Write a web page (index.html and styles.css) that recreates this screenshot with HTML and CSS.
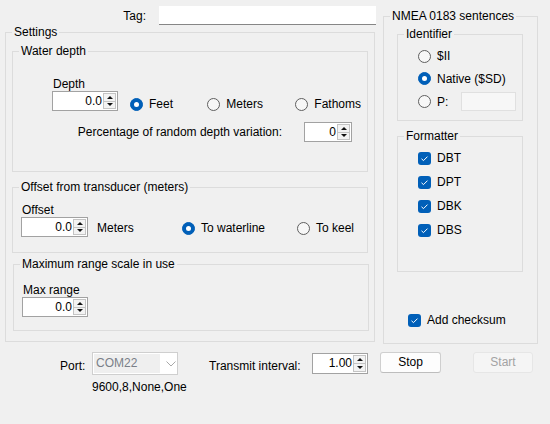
FILE: index.html
```html
<!DOCTYPE html>
<html>
<head>
<meta charset="utf-8">
<link rel="stylesheet" href="styles.css">
</head>
<body>
<div class="window">
  <div class="main">
    <div class="left">
      <div class="tag-row">
        <span class="lbl">Tag:</span>
        <div class="tag-input"></div>
      </div>
      <fieldset class="group settings">
        <legend>Settings</legend>
        <fieldset class="group inner water">
          <legend>Water depth</legend>
          <div class="depth-row">
            <div class="field-col depth-col">
              <span class="field-lbl">Depth</span>
              <div class="spin w66"><span class="val">0.0</span><span class="btns"><span class="up"></span><span class="dn"></span></span></div>
            </div>
            <div class="opt first w78"><span class="radio on"></span><span>Feet</span></div>
            <div class="opt w89"><span class="radio"></span><span>Meters</span></div>
            <div class="opt"><span class="radio"></span><span>Fathoms</span></div>
          </div>
          <div class="pct-row">
            <span>Percentage of random depth variation:</span>
            <div class="spin w48"><span class="val">0</span><span class="btns"><span class="up"></span><span class="dn"></span></span></div>
          </div>
        </fieldset>
        <fieldset class="group inner offset">
          <legend>Offset from transducer (meters)</legend>
          <div class="offset-row">
            <div class="field-col offset-col">
              <span class="field-lbl">Offset</span>
              <div class="spin w67"><span class="val">0.0</span><span class="btns"><span class="up"></span><span class="dn"></span></span></div>
            </div>
            <div class="opt unit w85"><span>Meters</span></div>
            <div class="opt w115"><span class="radio on"></span><span>To waterline</span></div>
            <div class="opt"><span class="radio"></span><span>To keel</span></div>
          </div>
        </fieldset>
        <fieldset class="group inner maxrange">
          <legend>Maximum range scale in use</legend>
          <div class="field-col max-col">
            <span class="field-lbl">Max range</span>
            <div class="spin w66"><span class="val">0.0</span><span class="btns"><span class="up"></span><span class="dn"></span></span></div>
          </div>
        </fieldset>
      </fieldset>
    </div>
    <div class="right">
      <fieldset class="group nmea">
        <legend>NMEA 0183 sentences</legend>
        <fieldset class="group sub identifier">
          <legend>Identifier</legend>
          <div class="list-row h22"><span class="radio"></span><span>$II</span></div>
          <div class="list-row h23"><span class="radio on"></span><span>Native ($SD)</span></div>
          <div class="list-row h23"><span class="radio"></span><span class="p-lbl">P:</span><div class="p-input"></div></div>
        </fieldset>
        <fieldset class="group sub formatter">
          <legend>Formatter</legend>
          <div class="list-row h24"><span class="check"><svg width="13" height="13" viewBox="0 0 13 13"><polyline points="3.5,6.8 5.5,8.6 9.5,4.6" fill="none" stroke="#fff" stroke-width="1"/></svg></span><span>DBT</span></div>
          <div class="list-row h24"><span class="check"><svg width="13" height="13" viewBox="0 0 13 13"><polyline points="3.5,6.8 5.5,8.6 9.5,4.6" fill="none" stroke="#fff" stroke-width="1"/></svg></span><span>DPT</span></div>
          <div class="list-row h24"><span class="check"><svg width="13" height="13" viewBox="0 0 13 13"><polyline points="3.5,6.8 5.5,8.6 9.5,4.6" fill="none" stroke="#fff" stroke-width="1"/></svg></span><span>DBK</span></div>
          <div class="list-row h24"><span class="check"><svg width="13" height="13" viewBox="0 0 13 13"><polyline points="3.5,6.8 5.5,8.6 9.5,4.6" fill="none" stroke="#fff" stroke-width="1"/></svg></span><span>DBS</span></div>
        </fieldset>
        <div class="checksum-row"><span class="check"><svg width="13" height="13" viewBox="0 0 13 13"><polyline points="3.5,6.8 5.5,8.6 9.5,4.6" fill="none" stroke="#fff" stroke-width="1"/></svg></span><span>Add checksum</span></div>
      </fieldset>
    </div>
  </div>
  <div class="bottom">
    <span class="port-lbl">Port:</span>
    <div class="port-col">
      <div class="combo"><span class="combo-sel">COM22</span><svg class="chev" width="10" height="6" viewBox="0 0 10 6"><polyline points="0.5,0.5 5,5 9.5,0.5" fill="none" stroke="#a8a8a8" stroke-width="1"/></svg></div>
      <span class="baud">9600,8,None,One</span>
    </div>
    <span class="ti-lbl">Transmit interval:</span>
    <div class="spin w56 tall"><span class="val">1.00</span><span class="btns"><span class="up"></span><span class="dn"></span></span></div>
    <div class="btn stop">Stop</div>
    <div class="btn start">Start</div>
  </div>
</div>
</body>
</html>
```
FILE: styles.css
```css
html, body {
  margin: 0;
  padding: 0;
  background: #f0f0f0;
}
body {
  width: 550px;
  height: 424px;
  overflow: hidden;
  font-family: "Liberation Sans", Arial, sans-serif;
  font-size: 12px;
  line-height: 14px;
  color: #000;
}
.window {
  padding-left: 5px;
}
.main {
  display: flex;
  align-items: flex-start;
}
.left {
  width: 371px;
}
.tag-row {
  display: flex;
  justify-content: flex-end;
  align-items: center;
  gap: 13px;
  padding-top: 6px;
  height: 19px;
}
.tag-row .lbl {
  padding-top: 1px;
}
.tag-input {
  width: 217px;
  height: 19px;
  box-sizing: border-box;
  background: #fff;
  border-bottom: 1px solid #868686;
}

/* group boxes */
fieldset.group {
  margin: 0;
  border: 1px solid #dcdcdc;
  padding: 0 6px;
  min-width: 0;
  box-sizing: border-box;
}
fieldset.group > legend {
  padding: 0 2px;
  line-height: 14px;
  height: 14px;
}
.settings {
  width: 370px;
  padding-top: 5px !important;
  padding-bottom: 10px !important;
}
.inner {
  width: 356px;
}
.water {
  padding-top: 19px !important;
  padding-bottom: 29px !important;
}
.offset {
  margin-top: 8px !important;
  padding-top: 9px !important;
  padding-bottom: 15px !important;
}
.maxrange {
  margin-top: 4px !important;
  margin-left: 1px !important;
  padding-top: 12px !important;
  padding-bottom: 13px !important;
}

.field-col {
  display: flex;
  flex-direction: column;
}
.field-lbl {
  padding-left: 1px;
  height: 14px;
}
.depth-col { margin-left: 33px; }
.offset-col { margin-left: 2px; }
.max-col { margin-left: 2px; }

.depth-row, .offset-row {
  display: flex;
  align-items: flex-end;
}
.opt {
  display: flex;
  align-items: center;
  gap: 6px;
  height: 20px;
  margin-bottom: -3px;
  white-space: nowrap;
}
.opt.first { margin-left: 12px; }
.opt.unit { margin-left: 9px; margin-bottom: -1px; }
.offset-row .opt { margin-bottom: -1px; }
.w78 { width: 78px; }
.w89 { width: 89px; }
.w85 { width: 85px; }
.w115 { width: 115px; }

.pct-row {
  display: flex;
  justify-content: flex-end;
  align-items: center;
  gap: 22px;
  margin-top: 11px;
  padding-right: 9px;
}

/* spinner */
.spin {
  display: flex;
  height: 20px;
  box-sizing: border-box;
  border: 1px solid #a2a2a2;
  background: #fff;
  padding: 1px 1px 1px 1px;
}
.spin.tall { height: 21px; }
.w66 { width: 66px; }
.w67 { width: 67px; }
.w48 { width: 48px; }
.w56 { width: 56px; }
.spin .val {
  flex: 1;
  text-align: right;
  line-height: 16px;
  padding-right: 1px;
}
.spin.tall .val { line-height: 17px; }
.btns {
  width: 13px;
  box-sizing: border-box;
  display: flex;
  flex-direction: column;
  border: 1px solid #c4c4c4;
  background: #f3f3f3;
}
.btns .up, .btns .dn {
  flex: 1;
  display: flex;
  align-items: center;
  justify-content: center;
}
.btns .up {
  border-bottom: 1px solid #c4c4c4;
}
.btns .up::after {
  content: "";
  border-left: 3px solid transparent;
  border-right: 3px solid transparent;
  border-bottom: 3px solid #111;
}
.btns .dn::after {
  content: "";
  border-left: 3px solid transparent;
  border-right: 3px solid transparent;
  border-top: 3px solid #111;
}

/* radio & checkbox */
.radio {
  flex: none;
  width: 13px;
  height: 13px;
  box-sizing: border-box;
  border-radius: 50%;
  border: 1px solid #5f5f5f;
  background: #f7f7f7;
  display: flex;
  align-items: center;
  justify-content: center;
}
.radio.on {
  background: #005fb8;
  border-color: #005fb8;
}
.radio.on::after {
  content: "";
  width: 5px;
  height: 5px;
  border-radius: 50%;
  background: #fff;
}
.check {
  flex: none;
  width: 13px;
  height: 13px;
  border-radius: 3px;
  background: #005fb8;
  display: flex;
}

/* right column */
.right {
  margin-left: 7px;
  padding-top: 9px;
}
.nmea {
  width: 155px;
  padding-top: 4px !important;
  padding-bottom: 13px !important;
}
.sub {
  width: 126px;
  margin-left: 7px !important;
}
.identifier {
  padding-top: 4px !important;
  padding-bottom: 7px !important;
}
.formatter {
  margin-top: 8px !important;
  padding-top: 3px !important;
  padding-bottom: 29px !important;
}
.list-row {
  display: flex;
  align-items: center;
  gap: 6px;
  margin-left: 14px;
}
.h22 { height: 22px; }
.h23 { height: 23px; }
.h24 { height: 24px; }
.p-lbl { width: 18px; }
.p-input {
  width: 56px;
  height: 19px;
  box-sizing: border-box;
  border: 1px solid #e0e0e0;
  background: #f7f7f7;
}
.checksum-row {
  display: flex;
  align-items: center;
  gap: 6px;
  height: 20px;
  margin-top: 38px;
  margin-left: 18px;
}

/* bottom bar */
.bottom {
  display: flex;
  align-items: flex-start;
  margin-top: 8px;
  margin-left: 55px;
}
.port-lbl {
  width: 32px;
  padding-top: 7px;
}
.port-col {
  display: flex;
  flex-direction: column;
  width: 86px;
  flex: none;
}
.combo {
  width: 86px;
  height: 23px;
  box-sizing: border-box;
  border: 1px solid #cfcfcf;
  background: #fff;
  display: flex;
  align-items: center;
  padding: 1px;
}
.combo-sel {
  width: 66px;
  height: 19px;
  line-height: 19px;
  background: #efefef;
  color: #7a7f88;
  padding-left: 2px;
  box-sizing: border-box;
}
.chev {
  margin-left: 6px;
}
.baud {
  margin-top: 5px;
  white-space: nowrap;
}
.ti-lbl {
  margin-left: 31px;
  width: 103px;
  flex: none;
  padding-top: 7px;
}
.bottom .spin {
  margin-top: 1px;
  flex: none;
}
.btn {
  height: 21px;
  box-sizing: border-box;
  border-radius: 3px;
  text-align: center;
  line-height: 19px;
  flex: none;
}
.stop {
  width: 61px;
  margin-left: 12px;
  border: 1px solid #cfcfcf;
  border-bottom-color: #bdbdbd;
  background: #fdfdfd;
}
.start {
  width: 60px;
  margin-left: 32px;
  border: 1px solid #e6e6e6;
  background: #f5f5f5;
  color: #a3a3a3;
}
```
